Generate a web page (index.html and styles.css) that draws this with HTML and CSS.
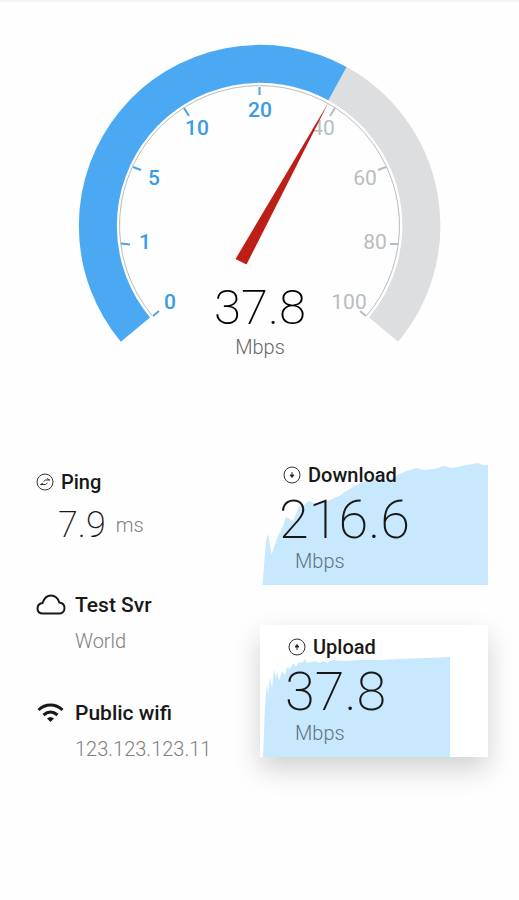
FILE: index.html
```html
<!DOCTYPE html>
<html lang="en">
<head>
<meta charset="utf-8">
<meta name="viewport" content="width=device-width, initial-scale=1">
<title>Speed test</title>
<link rel="stylesheet" href="styles.css">
</head>
<body>
<main class="app">
  <svg class="gauge" viewBox="0 0 519 370" role="img" aria-label="Speed gauge">
    <path class="track" d="M337.500 83.700A162 162 0 0 1 383.600 329.600"/>
    <path class="progress" d="M135.400 329.600A162 162 0 0 1 337.500 83.700"/>
    <path class="rim" d="M152.200 315.500A140 140 0 1 1 366.800 315.500"/>
    <g class="ticks-on">
      <path d="M153 316l6-5M121 243.500l9 1M133 167l8 3M184 108l5 8M259.500 87v8"/>
    </g>
    <g class="ticks-off">
      <path d="M335 108l-5 8M386 167l-8 3M398 244h-8M366 316l-6-5"/>
    </g>
    <g class="scale-on">
      <text x="170" y="309">0</text>
      <text x="145" y="249">1</text>
      <text x="154" y="185">5</text>
      <text x="197" y="135">10</text>
      <text x="260" y="117">20</text>
    </g>
    <g class="scale-off">
      <text x="323" y="135">40</text>
      <text x="365" y="185">60</text>
      <text x="375" y="249">80</text>
      <text x="349" y="309">100</text>
    </g>
    <path class="needle" d="M328.500 102.500L246.500 264.500L235.500 259Z"/>
    <text class="gauge-value" x="260" y="324">37.8</text>
    <text class="gauge-unit" x="260" y="354">Mbps</text>
  </svg>

  <div class="results">
    <div class="details">
      <section class="ping">
        <h2 class="label">
          <svg class="icon" viewBox="0 0 18 18" aria-hidden="true"><circle cx="9" cy="9" r="8"/><path d="M4.500 11.500h5M7 10l-2.500 1.500M14 7H9.500M13.500 7L11 5.500M7.500 8.500L9.500 7M9.500 11.500l2-1.500"/></svg>
          Ping
        </h2>
        <p class="ping-value">7.9 <span class="unit">ms</span></p>
      </section>
      <section class="detail">
        <svg class="wide-icon" viewBox="0 0 30 22" aria-hidden="true"><path d="M7 20.500C3.500 20.500 1.500 18.500 1.500 15.500C1.500 12.500 3.500 10.500 6.500 10C8 5.500 11 2.500 15 2.500C19 2.500 22 5.500 23.300 9.500C26.500 10 28.500 12 28.500 15C28.500 18.200 26.300 20.500 23 20.500Z"/></svg>
        <h2 class="label">Test Svr</h2>
        <p class="note">World</p>
      </section>
      <section class="detail">
        <svg class="wide-icon wifi" viewBox="0 0 30 22" aria-hidden="true"><path d="M2.500 9C9.500 2.300 19.500 2.300 26.500 9M7.500 14C12 10.200 17 10.200 21.500 14"/><path class="solid" d="M11 17.500Q14.500 14.500 18 17.500L14.500 21Z"/></svg>
        <h2 class="label">Public wifi</h2>
        <p class="note">123.123.123.11</p>
      </section>
    </div>

    <div class="charts">
      <section class="card download">
        <svg class="chart" viewBox="0 0 228 122" preserveAspectRatio="none" aria-hidden="true"><path d="M2.500 122L6 78L8 71L11.500 91L18 73L23 63L26 54L33 58L39 44L44 42L49 38L54 40L62 40L70 37L79 33L91 25L100 20L110 17L120 14L126 18L132 15L144 9L156 5L164 7L174 6L184 3L192 5L202 3L218 0L222 2L228 2V122Z"/></svg>
        <h2 class="label">
          <svg class="icon" viewBox="0 0 18 18" aria-hidden="true"><circle cx="9" cy="9" r="8"/><path d="M9 6v5"/><path class="solid" d="M7 9h4L9 11.500Z"/></svg>
          Download
        </h2>
        <p class="speed">216.6</p>
        <p class="speed-unit">Mbps</p>
      </section>
      <section class="card upload">
        <svg class="chart" viewBox="0 0 228 132" preserveAspectRatio="none" aria-hidden="true"><path d="M3 132L5 80L7 58L8 70L10 52L12 64L14 44L16 54L17 46L19 56L22 46L25 50L27 42L30 44L33 38L36 42L38 38L43 37L45 34L47 38L55 36L59 38L63 36L67 38L72 35L84 36L100 35L122 35L140 34L165 33L190 32V132Z"/></svg>
        <h2 class="label">
          <svg class="icon" viewBox="0 0 18 18" aria-hidden="true"><circle cx="9" cy="9" r="8"/><path d="M9 7v5"/><path class="solid" d="M7 9L9 6.500L11 9Z"/></svg>
          Upload
        </h2>
        <p class="speed">37.8</p>
        <p class="speed-unit">Mbps</p>
      </section>
    </div>
  </div>
</main>
</body>
</html>
```
FILE: styles.css
```css
* { box-sizing: border-box; }

body {
  margin: 0;
  border-top: 2px solid #f7f7f7;
  background: #fefefe;
  color: #181818;
  font-family: Roboto, "Liberation Sans", sans-serif;
  font-size: 20px;
}

h2, p { margin: 0; }

svg { display: block; }

.app {
  max-width: 519px;
  margin: -2px auto 0;
}

.gauge { width: 100%; }

.gauge path { fill: none; }
.gauge .track { stroke: #dcdee0; stroke-width: 38px; }
.gauge .progress { stroke: #4ba8f3; stroke-width: 38px; }
.gauge .rim { stroke: #b9bcc0; stroke-width: 1px; }
.gauge .needle { fill: #be1e18; }
.ticks-on { stroke: #4ba3e3; stroke-width: 2px; }
.ticks-off { stroke: #b9bcc0; stroke-width: 2px; }
.gauge text { text-anchor: middle; }
.scale-on { fill: #3a9be6; font-size: 21px; font-weight: 500; }
.scale-off { fill: #b9bcc1; font-size: 21px; }
.gauge-value { font-size: 49px; font-weight: 200; }
.gauge-unit { fill: #666; font-weight: 300; }

.results {
  display: grid;
  grid-template-columns: 193px 1fr;
  column-gap: 31px;
  padding: 93px 31px 40px 36px;
}

.label {
  display: flex;
  align-items: center;
  gap: 7px;
  font-size: 20px;
  font-weight: 500;
  line-height: 24px;
}

.icon {
  width: 18px;
  height: 18px;
  fill: none;
  stroke: #333;
  stroke-width: 1px;
}

.solid { fill: #181818; }

.details { padding-top: 7px; }

.ping-value {
  display: flex;
  align-items: center;
  gap: 10px;
  padding: 11px 0 0 22px;
  font-size: 36px;
  font-weight: 200;
  line-height: 40px;
}

.unit, .note, .speed-unit {
  color: #808080;
  font-size: 20px;
  font-weight: 300;
}

.detail {
  display: grid;
  grid-template-columns: 30px 1fr;
  column-gap: 9px;
  row-gap: 12px;
  margin-top: 48px;
}

.detail .label { font-size: 21px; }

.wide-icon {
  width: 30px;
  height: 22px;
  fill: none;
  stroke: #181818;
  stroke-width: 2px;
}

.wifi { stroke-width: 3px; }
.wifi .solid { stroke: none; }

.note {
  grid-column: 2;
  line-height: 24px;
}

.card {
  position: relative;
}

.chart {
  position: absolute;
  inset: 0;
  width: 100%;
  height: 100%;
  fill: #c8e8fd;
}

.card .label, .card p { position: relative; }

.speed {
  padding-top: 3px;
  font-size: 54px;
  font-weight: 200;
  line-height: 60px;
}

.speed-unit {
  padding-left: 35px;
  line-height: 22px;
  color: #60737f;
}

.download { padding: 0 0 13px; }
.download .label { padding-left: 23px; }
.download .speed { padding-left: 19px; }

.upload {
  margin-top: 40px;
  padding: 10px 0 13px;
  background: #fff;
  box-shadow: 0 12px 26px rgba(0, 0, 0, 0.18);
}

.upload .label { padding-left: 28px; }
.upload .speed { padding-left: 25px; }
```
